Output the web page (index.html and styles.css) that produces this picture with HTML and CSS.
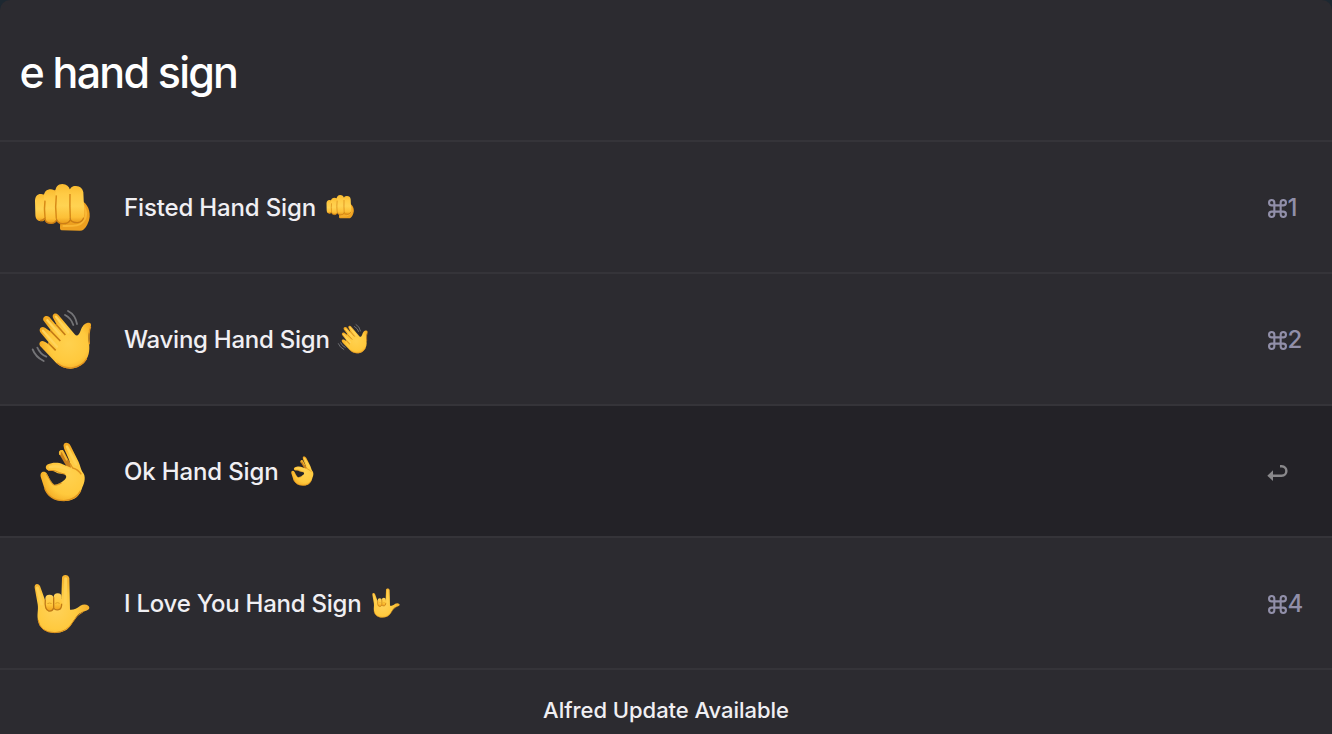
FILE: index.html
```html
<!DOCTYPE html>
<html lang="en">
<head>
<meta charset="utf-8">
<title>Alfred</title>
<link rel="stylesheet" href="styles.css">
</head>
<body>
<svg class="defs" aria-hidden="true">
  <defs>
    <linearGradient id="skin" x1="0" y1="0" x2="0" y2="1"><stop offset="0" stop-color="#ffd25a"/><stop offset=".6" stop-color="#ffc83c"/><stop offset="1" stop-color="#f0a01c"/></linearGradient>
    <linearGradient id="finger" x1="0" y1="0" x2="0" y2="1"><stop offset="0" stop-color="#f9bb30"/><stop offset=".25" stop-color="#ffcb45"/><stop offset=".55" stop-color="#ffd352"/><stop offset=".85" stop-color="#fdbf36"/><stop offset="1" stop-color="#e99a1a"/></linearGradient>
    <radialGradient id="palm" gradientUnits="userSpaceOnUse" cx="145" cy="125" r="88"><stop offset="0" stop-color="#ffd14f"/><stop offset=".65" stop-color="#ffc93d"/><stop offset="1" stop-color="#f2a821"/></radialGradient>
    <radialGradient id="palmLow" gradientUnits="userSpaceOnUse" cx="108" cy="130" r="92"><stop offset="0" stop-color="#ffd25a"/><stop offset=".65" stop-color="#ffca3f"/><stop offset="1" stop-color="#f5b32f"/></radialGradient>
    <filter id="soft" x="-30%" y="-30%" width="160%" height="160%"><feGaussianBlur stdDeviation="2.2"/></filter>
  </defs>
  <symbol id="fist" viewBox="0 0 252 228">
    <path d="M176 88C197 94 211 116 209 140C207 157 198 173 190 179Q187 182 180 182L125 181Q119 180 120 171L121 148L176 146Z" fill="#eda020"/>
    <path d="M190 105C202 126 201 145 184 160Q174 170 128 168" fill="none" stroke="#f9b734" stroke-width="6" filter="url(#soft)"/>
    <path d="M60 78L88 66L112 58L150 58L180 68L184 145L60 145Z" fill="#e8a026"/>
    <path d="M45 93C45 78 53 71 64 72Q76 73 77 90V140Q76 154 63 154C51 153 46 146 46 132Z" fill="url(#finger)"/>
    <path d="M72 82C71 65 80 58 93 58Q108 59 110 76V144Q109 161 93 161C79 160 74 152 74 139Z" fill="url(#finger)"/>
    <path d="M106 70C105 51 114 42 127 42Q146 43 150 60V143Q149 161 129 161C113 160 108 151 108 137Z" fill="url(#finger)"/>
    <path d="M148 68C148 54 156 47 168 48Q187 49 190 67L193 133Q192 157 171 158C155 157 150 149 150 136Z" fill="url(#finger)"/>
    <path d="M75 92Q72 115 75 143M109 76Q105 110 109 146M150 72Q149 110 151 145" fill="none" stroke="#d88b18" stroke-width="4.5" filter="url(#soft)"/>
    <path d="M60 152Q68 152 75 145Q76 160 93 160Q106 159 110 149Q115 162 129 161Q146 161 151 149Q157 159 174 158Q187 156 191 143" fill="none" stroke="#cb7d14" stroke-width="4" filter="url(#soft)"/>
  </symbol>
  <symbol id="wave" viewBox="0 0 252 228">
    <path d="M61 119C56 124 58 130 64 136L108 182C132 204 166 207 190 184C207 168 210 145 207 124C203 103 207 86 212 75C216 65 210 61 201 63C190 66 185 77 181 88C177 99 171 105 164 97L116 40C106 28 92 38 101 51L109 66L106 67L88 45C77 36 64 47 72 58L92 84L90 88L75 77C64 70 54 81 62 92L86 121L83 125C73 116 65 115 61 119Z" fill="url(#palm)"/>
    <path d="M107 66L136 99M91 86L121 117M85 123L107 145" fill="none" stroke="#c57b14" stroke-width="5" filter="url(#soft)"/>
    <path d="M82 55L119 97M69 86L111 134M108 44L145 91" fill="none" stroke="#ffd45c" stroke-width="7" stroke-linecap="round" filter="url(#soft)"/>
    <path d="M111 183C140 206 181 201 200 170M212 74Q205 89 208 127" fill="none" stroke="#e19420" stroke-width="4" filter="url(#soft)"/>
    <path d="M135 39Q153 48 160 69M144 27Q166 38 171 66M38 142Q46 164 71 177M52 137Q61 157 79 164" fill="none" stroke="#747477" stroke-width="5.5" stroke-linecap="round"/>
  </symbol>
  <symbol id="ok" viewBox="0 0 252 228">
    <path d="M118 61C114 51 123 45 131 51L157 99L146 108Z" fill="#c97f1c"/>
    <path d="M120 60Q118 50 127 51L140 77" fill="none" stroke="#f4b72f" stroke-width="6" stroke-linecap="round"/>
    <path fill-rule="evenodd" d="M132 29C138 24 148 27 152 36L176 84C180 94 183 106 187 113C199 126 194 145 187 160C180 183 167 202 132 201C101 201 80 184 72 159L62 128C59 112 74 109 81 119L90 136Q95 123 104 120C110 116 104 110 92 111C76 111 73 96 84 91C94 86 115 84 128 91L153 101C151 80 137 57 132 43Q129 33 132 29Z" fill="url(#palm)"/>
    <path d="M84 109L104 110Q116 116 136 121M79 120L96 149Q105 159 125 147" fill="none" stroke="#d78d1f" stroke-width="3" filter="url(#soft)"/>
    <path d="M150 88L158 102Q174 106 184 121M74 163Q88 200 132 200Q168 198 182 170" fill="none" stroke="#df941d" stroke-width="4" filter="url(#soft)"/>
    <path d="M141 38L168 91M90 99Q116 93 148 109" fill="none" stroke="#ffd253" stroke-width="8" stroke-linecap="round" filter="url(#soft)"/>
    <path d="M80 113L104 113Q112 119 126 120C140 121 142 130 134 137Q119 150 103 152Q97 148 91 138Q87 122 80 113Z" fill="#252428"/>
  </symbol>
  <symbol id="love" viewBox="0 0 252 228">
    <path d="M44 65C42 52 55 50 60 60L75 102L124 99L126 36C126 23 147 24 148 37L150 131C161 132 170 128 181 119C194 111 208 117 208 125C208 132 197 134 189 137C171 143 164 160 155 174C144 193 127 201 103 201C76 200 58 185 54 163C50 144 56 132 53 115Z" fill="url(#palmLow)"/>
    <path d="M52 66L65 114M137 38L136 112" fill="none" stroke="#ffd152" stroke-width="9" stroke-linecap="round" filter="url(#soft)"/>
    <rect x="76" y="86" width="25" height="49" rx="12" fill="url(#skin)"/>
    <rect x="101" y="82" width="24" height="50" rx="12" fill="url(#skin)"/>
    <path d="M76 101Q73 130 86 135Q97 137 101 126Q106 134 116 131Q125 129 125 113M101 94V125" fill="none" stroke="#bf7917" stroke-width="4" filter="url(#soft)"/>
    <path d="M82 113Q89 109 95 113M106 112Q113 108 119 112" fill="none" stroke="#dfa026" stroke-width="3" filter="url(#soft)"/>
    <path d="M54 161Q60 200 105 200Q142 197 157 170Q171 145 190 137" fill="none" stroke="#d98e1d" stroke-width="3" filter="url(#soft)"/>
  </symbol>
</svg>
<main class="window">
  <header class="search"><span class="query">e hand sign</span></header>
  <section class="results">
    <div class="row">
      <svg class="icon"><use href="#fist"/></svg>
      <span class="title title-fist">Fisted Hand Sign</span><svg class="emoji"><use href="#fist"/></svg>
      <span class="key"><svg class="cmd" viewBox="0 0 18 18"><path d="M6 6V3.5A2.5 2.5 0 1 0 3.5 6H14.5A2.5 2.5 0 1 0 12 3.5V14.5A2.5 2.5 0 1 0 14.5 12H3.5A2.5 2.5 0 1 0 6 14.5Z"/></svg><span class="digit">1</span></span>
    </div>
    <div class="row">
      <svg class="icon"><use href="#wave"/></svg>
      <span class="title title-wave">Waving Hand Sign</span><svg class="emoji"><use href="#wave"/></svg>
      <span class="key"><svg class="cmd" viewBox="0 0 18 18"><path d="M6 6V3.5A2.5 2.5 0 1 0 3.5 6H14.5A2.5 2.5 0 1 0 12 3.5V14.5A2.5 2.5 0 1 0 14.5 12H3.5A2.5 2.5 0 1 0 6 14.5Z"/></svg><span class="digit">2</span></span>
    </div>
    <div class="row selected">
      <svg class="icon"><use href="#ok"/></svg>
      <span class="title title-ok">Ok Hand Sign</span><svg class="emoji"><use href="#ok"/></svg>
      <span class="key"><svg class="return" viewBox="0 0 22 18"><path class="hook" d="M5 11.7H14.5C21 11.7 21 2.2 14.5 2.2H13"/><path class="tip" d="M.3 11.7L6 6.3V17Z"/></svg></span>
    </div>
    <div class="row">
      <svg class="icon"><use href="#love"/></svg>
      <span class="title title-love">I Love You Hand Sign</span><svg class="emoji"><use href="#love"/></svg>
      <span class="key"><svg class="cmd" viewBox="0 0 18 18"><path d="M6 6V3.5A2.5 2.5 0 1 0 3.5 6H14.5A2.5 2.5 0 1 0 12 3.5V14.5A2.5 2.5 0 1 0 14.5 12H3.5A2.5 2.5 0 1 0 6 14.5Z"/></svg><span class="digit">4</span></span>
    </div>
  </section>
  <footer class="footer"><span class="update">Alfred Update Available</span></footer>
</main>
</body>
</html>
```
FILE: styles.css
```css
* { box-sizing: border-box; }
body { margin: 0; background: #1d2831; font-family: Inter, "Liberation Sans", sans-serif; }
.defs { position: absolute; width: 0; height: 0; }
.window { display: flex; flex-direction: column; width: 1332px; height: 734px; overflow: hidden; background: #2c2b30; border-radius: 10px 10px 0 0; }
.search { height: 142px; padding: 45px 0 0 19.5px; border-bottom: 2px solid #353439; }
.query { display: block; color: #fff; font-size: 43px; font-weight: 450; line-height: 54px; letter-spacing: -1.8px; white-space: nowrap; }
.row { display: flex; align-items: center; height: 132px; padding: 0 28px 0 20px; border-bottom: 2px solid #353439; }
.selected { background: #232227; }
.icon { width: 84px; height: 76px; margin-top: 2px; }
.title { margin: 2px 0 0 20px; color: #f0eff3; font-size: 24px; font-weight: 450; line-height: 32px; letter-spacing: -0.15px; white-space: nowrap; }
.title-fist { width: 195px; }
.title-wave { width: 208px; letter-spacing: -0.25px; }
.title-ok { width: 156.5px; }
.title-love { width: 240.5px; letter-spacing: -0.25px; }
.emoji { width: 42px; height: 38px; }
.key { display: flex; align-items: center; width: 37px; margin-left: auto; color: #918fa9; font-size: 24px; font-weight: 500; line-height: 32px; }
.digit { margin-top: 2px; }
.cmd { width: 19px; height: 19px; margin: 2px 1px 0 .5px; fill: none; stroke: currentColor; stroke-width: 2; }
.return { width: 22px; height: 18px; margin: 3px 0 0 0; color: #89888b; }
.hook { fill: none; stroke: currentColor; stroke-width: 2.4; }
.tip { fill: currentColor; }
.footer { display: flex; justify-content: center; padding-top: 26px; color: #f0eff3; }
.update { font-size: 22px; font-weight: 450; line-height: 28px; letter-spacing: -0.04px; white-space: nowrap; }
```
